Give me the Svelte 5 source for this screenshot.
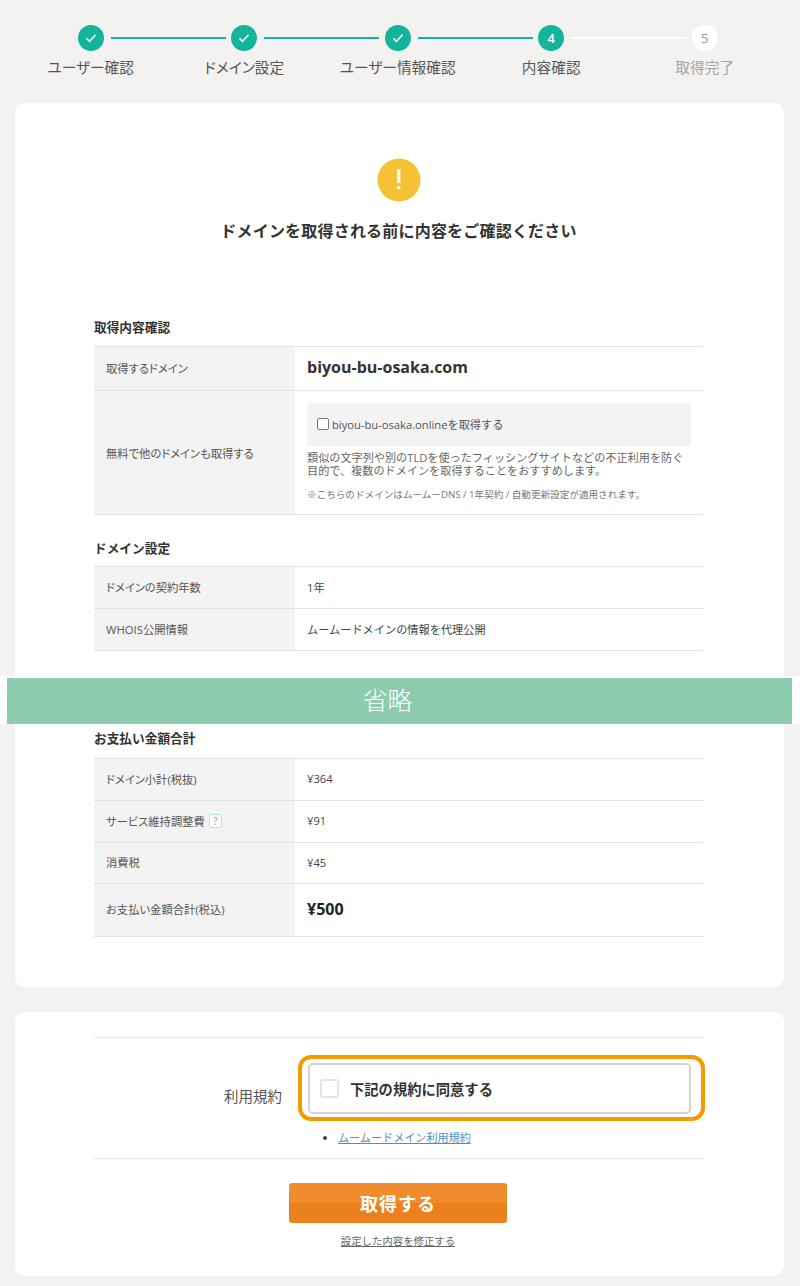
<script>
  const steps = [
    { label: 'ユーザー確認', state: 'done' },
    { label: 'ドメイン設定', state: 'done' },
    { label: 'ユーザー情報確認', state: 'done' },
    { label: '内容確認', state: 'current', n: 4 },
    { label: '取得完了', state: 'todo', n: 5 }
  ];
</script>

<div class="page">
  <ol class="stepper">
    {#each steps as s, i}
      <li class="step {s.state}">
        <span class="dot">
          {#if s.state === 'done'}
            <svg width="14" height="14" viewBox="0 0 14 14"><path d="M2.5 7.4l3 3 6-6.6" fill="none" stroke="#fff" stroke-width="1.5"/></svg>
          {:else}
            {s.n}
          {/if}
        </span>
        <span class="label">{s.label}</span>
      </li>
    {/each}
  </ol>

  <section class="card top">
    <div class="alert">
      <svg width="44" height="44" viewBox="0 0 44 44"><circle cx="22" cy="22" r="21.5" fill="#f5c235"/><rect x="20" y="11" width="3.4" height="14" rx="1" fill="#fff"/><rect x="20" y="28" width="3.4" height="3.4" rx="1" fill="#fff"/></svg>
      <h1>ドメインを取得される前に内容をご確認ください</h1>
    </div>

    <h2 class="h-first">取得内容確認</h2>
    <table>
      <tbody>
        <tr class="r44"><th>取得するドメイン</th><td class="domain">biyou-bu-osaka.com</td></tr>
        <tr class="r124">
          <th class="flat">無料で他のドメインも取得する</th>
          <td class="opt">
            <label class="optbox"><span class="cb"></span>biyou-bu-osaka.onlineを取得する</label>
            <p class="desc">類似の文字列や別のTLDを使ったフィッシングサイトなどの不正利用を防ぐ目的で、複数のドメインを取得することをおすすめします。</p>
            <p class="note">※こちらのドメインはムームーDNS / 1年契約 / 自動更新設定が適用されます。</p>
          </td>
        </tr>
      </tbody>
    </table>

    <h2 class="h-second">ドメイン設定</h2>
    <table>
      <tbody>
        <tr class="r42"><th>ドメインの契約年数</th><td>1年</td></tr>
        <tr class="r42"><th>WHOIS公開情報</th><td>ムームードメインの情報を代理公開</td></tr>
      </tbody>
    </table>
  </section>

  <div class="omit-wrap"><div class="omit">省略</div></div>

  <section class="card bottom">
    <h2 class="h-pay">お支払い金額合計</h2>
    <table>
      <tbody>
        <tr class="r42"><th>ドメイン小計(税抜)</th><td>¥364</td></tr>
        <tr class="r42"><th>サービス維持調整費 <span class="help">?</span></th><td>¥91</td></tr>
        <tr class="r41"><th>消費税</th><td>¥45</td></tr>
        <tr class="r53"><th>お支払い金額合計(税込)</th><td class="total">¥500</td></tr>
      </tbody>
    </table>
  </section>

  <section class="card terms">
    <div class="terms-row">
      <div class="terms-label">利用規約</div>
      <div class="terms-main">
        <div class="highlight">
          <label class="agree"><span class="cb2"></span>下記の規約に同意する</label>
        </div>
        <ul><li><a href="#terms">ムームードメイン利用規約</a></li></ul>
      </div>
    </div>
    <div class="actions">
      <button type="button">取得する</button>
      <a class="back" href="#back">設定した内容を修正する</a>
    </div>
  </section>
</div>

<style>
  :global(body) {
    margin: 0;
    background: #f3f2f0;
    font-family: "Open Sans", "Noto Sans CJK JP", sans-serif;
    color: #444;
  }
  .page { width: 800px; height: 1286px; overflow: hidden; }

  .stepper {
    list-style: none;
    margin: 0;
    padding: 25px 0 0 14px;
    height: 78px;
    display: flex;
    box-sizing: content-box;
  }
  .step {
    width: 153.5px;
    display: flex;
    flex-direction: column;
    align-items: center;
    position: relative;
    font-size: 14.7px;
    font-feature-settings: "palt";
  }
  .step:not(:last-child)::after {
    content: '';
    position: absolute;
    top: 12px;
    left: calc(50% + 20px);
    width: 115px;
    height: 2px;
    background: #14b39b;
  }
  .step.current::after { background: #fff !important; }
  .dot {
    width: 26px;
    height: 26px;
    border-radius: 50%;
    background: #14b39b;
    color: #fff;
    display: flex;
    align-items: center;
    justify-content: center;
    font-size: 13px;
    font-weight: 600;
  }
  .todo .dot { background: #fff; color: #999; font-weight: 400; }
  .label { margin-top: 6px; line-height: 20px; color: #555; white-space: nowrap; }
  .todo .label { color: #a3a3a3; }

  .card {
    background: #fff;
    margin: 0 16px 0 15px;
    padding: 0 81px 0 79px;
    box-sizing: border-box;
  }
  .card.top { height: 573px; border-radius: 10px 10px 0 0; }
  .alert { padding-top: 55px; display: flex; flex-direction: column; align-items: center; }
  h1 { margin: 17px 0 0; font-size: 16px; line-height: 24px; font-weight: 700; color: #333; letter-spacing: .2px; }

  h2 { margin: 0; font-size: 12.7px; line-height: 18px; font-weight: 700; color: #333; }
  .h-first { margin-top: 75px; margin-bottom: 10px; }
  .h-second { margin-top: 24px; margin-bottom: 9px; }
  .h-pay { padding-top: 5px; margin-bottom: 11px; }

  table { width: 100%; border-collapse: collapse; table-layout: fixed; border-top: 1px solid #e3e3e3; }
  tr { border-bottom: 1px solid #e3e3e3; }
  th {
    width: 201px;
    box-sizing: border-box;
    background: #f3f3f3;
    padding: 0 12px 2px;
    font-size: 11.3px;
    font-weight: 400;
    text-align: left;
    color: #555;
    font-feature-settings: "palt";
  }
  th.flat { padding-bottom: 0; }
  td { padding: 0 12px 2px; font-size: 11.2px; color: #444; }
  .r44 { height: 44px; }
  .r124 { height: 124px; }
  .r42 { height: 42px; }
  .r41 { height: 41px; }
  .r53 { height: 53px; }
  .domain { font-size: 16px; font-weight: 700; color: #333; padding-bottom: 4px; }
  .total { font-size: 16px; font-weight: 700; color: #222; }

  .optbox {
    display: flex;
    align-items: center;
    height: 43px;
    background: #f3f3f3;
    border-radius: 3px;
    padding: 0 10px;
    font-size: 11.2px;
    color: #555;
  }
  .cb {
    width: 10px;
    height: 10px;
    border: 1px solid #777;
    border-radius: 2px;
    background: #fff;
    margin-right: 3px;
  }
  .desc { margin: 5px 0 0; font-size: 11.15px; line-height: 13px; color: #666; }
  .note { margin: 12px 0 0; font-size: 9.6px; line-height: 12px; color: #777; }

  .help {
    display: inline-block;
    width: 13px;
    height: 14px;
    line-height: 12px;
    box-sizing: border-box;
    margin-left: 1px;
    border: 1px solid #b8e0ea;
    border-radius: 2px;
    background: #fff;
    color: #5aa7c7;
    font-size: 10px;
    text-align: center;
    vertical-align: 1px;
  }

  .omit-wrap { background: #fff; padding: 2px 8px 0 7px; }
  .omit {
    height: 46px;
    background: #8dcbae;
    color: #fff;
    font-size: 24.5px;
    line-height: 46px;
    text-align: center;
    padding-right: 24px;
    box-sizing: border-box;
    font-weight: 300;
  }

  .card.bottom { height: 263px; border-radius: 0 0 10px 10px; }

  .card.terms { margin-top: 25px; height: 264px; border-radius: 10px; padding-top: 25px; }
  .terms-row {
    display: flex;
    border-top: 1px solid #e6e6e6;
    border-bottom: 1px solid #e6e6e6;
    height: 122px;
    box-sizing: border-box;
  }
  .terms-label {
    width: 188px;
    text-align: right;
    font-size: 14.5px;
    line-height: 20px;
    padding-top: 49px;
    color: #555;
    box-sizing: border-box;
  }
  .terms-main { margin-left: 16px; flex: 1; padding-top: 17px; min-width: 0; margin-right: -2px; }
  .highlight {
    height: 66px;
    box-sizing: border-box;
    border: 4px solid #f59b00;
    border-radius: 13px;
    padding: 4px 10px 3px 6px;
  }
  .agree {
    height: 100%;
    box-sizing: border-box;
    display: flex;
    align-items: center;
    border: 2px solid #d4d4d4;
    border-radius: 5px;
    background: #fff;
    padding: 0 0 0 10px;
    font-size: 14.3px;
    font-weight: 700;
    color: #333;
  }
  .cb2 {
    width: 19px;
    height: 19px;
    box-sizing: border-box;
    border: 2px solid #e4e4e4;
    border-radius: 3px;
    margin-right: 11px;
  }
  ul { margin: 9px 0 0; padding: 0 0 0 40px; font-size: 11.1px; line-height: 16px; }
  ul a { color: #4f8fc0; }

  .actions { display: flex; flex-direction: column; align-items: center; padding: 24px 1px 0 0; }
  button {
    width: 218px;
    height: 40px;
    border: 0;
    border-radius: 3px;
    background: linear-gradient(#f08c2b 0 50%, #ec801d 50% 100%);
    color: #fff;
    font: 700 18px "Open Sans", "Noto Sans CJK JP", sans-serif;
    letter-spacing: 1px;
    padding: 0;
  }
  .back { margin-top: 10px; font-size: 10.4px; line-height: 16px; color: #666; }
</style>
